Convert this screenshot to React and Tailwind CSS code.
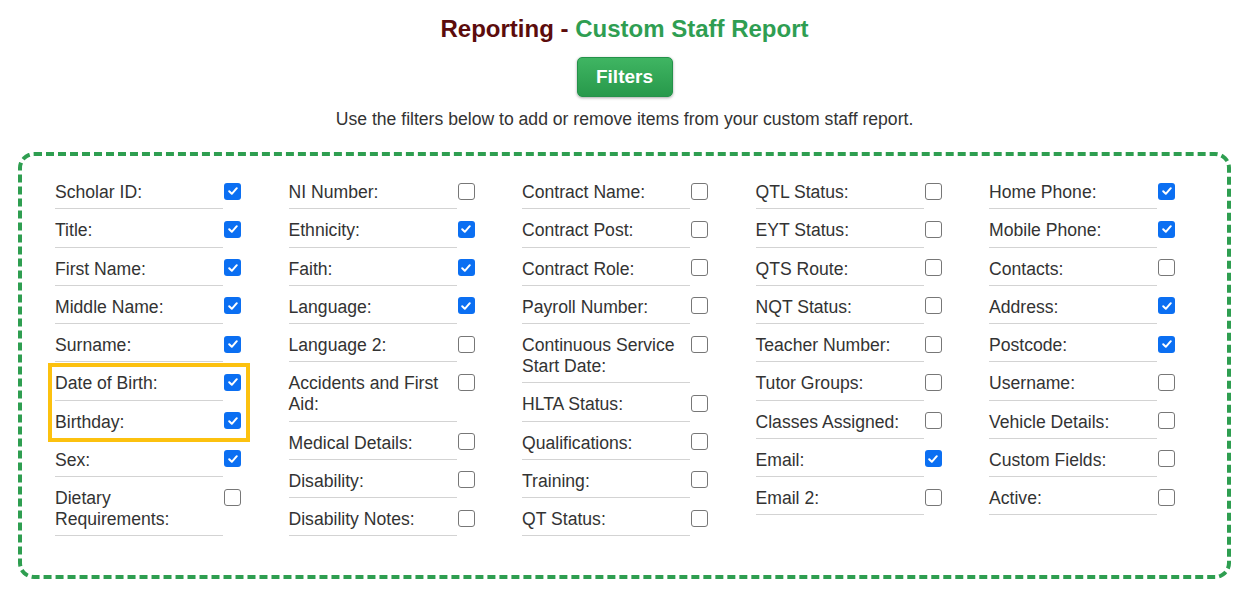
import React from "react";

const columns = [
  [
    { label: "Scholar ID:", on: true },
    { label: "Title:", on: true },
    { label: "First Name:", on: true },
    { label: "Middle Name:", on: true },
    { label: "Surname:", on: true },
    { label: "Date of Birth:", on: true, mark: true },
    { label: "Birthday:", on: true, mark: true },
    { label: "Sex:", on: true },
    { label: "Dietary Requirements:", on: false },
  ],
  [
    { label: "NI Number:", on: false },
    { label: "Ethnicity:", on: true },
    { label: "Faith:", on: true },
    { label: "Language:", on: true },
    { label: "Language 2:", on: false },
    { label: "Accidents and First Aid:", on: false },
    { label: "Medical Details:", on: false },
    { label: "Disability:", on: false },
    { label: "Disability Notes:", on: false },
  ],
  [
    { label: "Contract Name:", on: false },
    { label: "Contract Post:", on: false },
    { label: "Contract Role:", on: false },
    { label: "Payroll Number:", on: false },
    { label: "Continuous Service Start Date:", on: false },
    { label: "HLTA Status:", on: false },
    { label: "Qualifications:", on: false },
    { label: "Training:", on: false },
    { label: "QT Status:", on: false },
  ],
  [
    { label: "QTL Status:", on: false },
    { label: "EYT Status:", on: false },
    { label: "QTS Route:", on: false },
    { label: "NQT Status:", on: false },
    { label: "Teacher Number:", on: false },
    { label: "Tutor Groups:", on: false },
    { label: "Classes Assigned:", on: false },
    { label: "Email:", on: true },
    { label: "Email 2:", on: false },
  ],
  [
    { label: "Home Phone:", on: true },
    { label: "Mobile Phone:", on: true },
    { label: "Contacts:", on: false },
    { label: "Address:", on: true },
    { label: "Postcode:", on: true },
    { label: "Username:", on: false },
    { label: "Vehicle Details:", on: false },
    { label: "Custom Fields:", on: false },
    { label: "Active:", on: false },
  ],
];

const Check = ({ on }) =>
  on ? (
    <span className="flex h-[17px] w-[17px] shrink-0 items-center justify-center rounded-[3px] bg-[#0b6ff2]">
      <svg width="12" height="12" viewBox="0 0 12 12" fill="none">
        <path
          d="M2.2 6.3 L4.8 8.8 L9.8 3.2"
          stroke="white"
          strokeWidth="2"
          strokeLinecap="round"
          strokeLinejoin="round"
        />
      </svg>
    </span>
  ) : (
    <span className="block h-[17px] w-[17px] shrink-0 rounded-[3px] border-[1.5px] border-[#777] bg-white" />
  );

const Row = ({ item }) => (
  <div className="flex items-start">
    <div className="w-[168px] border-b border-[#d3d3d3] pt-[11px] pb-[5.25px]">
      <p className="text-[17.6px] leading-[21px] text-[#333]">{item.label}</p>
    </div>
    <div className="pt-[11.5px] pl-[1px]">
      <Check on={item.on} />
    </div>
  </div>
);

const Column = ({ items }) => {
  const before = [];
  const marked = [];
  const after = [];
  items.forEach((it) => {
    if (it.mark) marked.push(it);
    else if (marked.length) after.push(it);
    else before.push(it);
  });

  return (
    <div className="flex flex-col">
      {before.map((it, i) => (
        <Row key={i} item={it} />
      ))}
      {marked.length > 0 && (
        <div className="relative">
          {marked.map((it, i) => (
            <Row key={i} item={it} />
          ))}
          {/* highlight annotation */}
          <div className="pointer-events-none absolute top-[1px] -bottom-[3.5px] -left-[7px] w-[202px] border-[4px] border-[#fcc10f]" />
        </div>
      )}
      {after.map((it, i) => (
        <Row key={i} item={it} />
      ))}
    </div>
  );
};

export default function App() {
  return (
    <div className="min-h-[591px] w-[1249px] bg-white font-['Liberation_Sans',Arial,sans-serif]">
      <h1 className="pt-[15px] text-center text-[24px] leading-[28px] font-bold">
        <span className="text-[#5c0c0c]">Reporting - </span>
        <span className="text-[#2f9e52]">Custom Staff Report</span>
      </h1>

      <div className="mt-[14px] flex justify-center">
        <button className="h-[40px] w-[96px] rounded-[5px] border border-[#24924a] bg-gradient-to-b from-[#3fb562] to-[#27994b] text-[19px] font-bold text-white shadow-[0_1px_3px_rgba(0,0,0,0.35)]">
          Filters
        </button>
      </div>

      <p className="mt-[12px] text-center text-[17.6px] leading-[21px] text-[#333]">
        Use the filters below to add or remove items from your custom staff
        report.
      </p>

      <div className="mx-[18px] mt-[22px] h-[427px] rounded-[16px] border-[4px] border-dashed border-[#2e9e50] pt-[15px] pl-[33px]">
        <div className="grid grid-cols-[repeat(5,233.5px)]">
          {columns.map((col, i) => (
            <Column key={i} items={col} />
          ))}
        </div>
      </div>
    </div>
  );
}
